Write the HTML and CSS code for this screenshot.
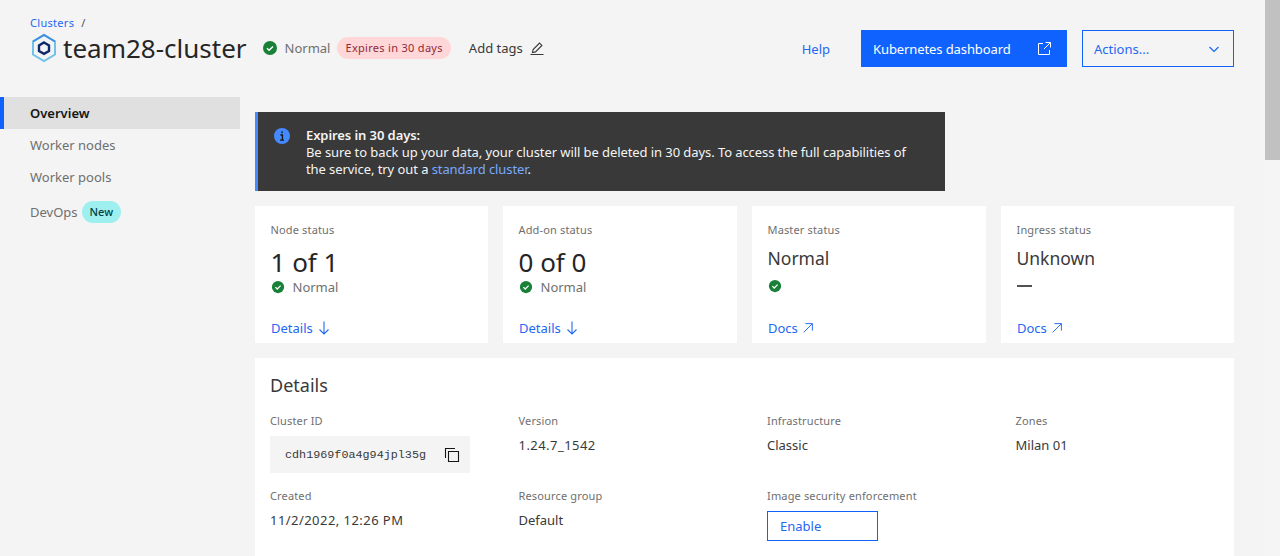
FILE: index.html
```html
<!DOCTYPE html>
<html lang="en">
<head>
    <meta charset="UTF-8">
    <meta name="viewport" content="width=device-width, initial-scale=1.0">
    <title>team28-cluster</title>
    <link rel="stylesheet" href="styles.css">
</head>
<body>

<svg class="sprites" width="0" height="0">
    <symbol id="check" viewBox="0 0 16 16">
        <circle cx="8" cy="8" r="7" fill="#198038"/>
        <path d="M5 8.2l2.1 2.1L11 6.400" fill="none" stroke="#fff" stroke-width="1.400"/>
    </symbol>
    <symbol id="arrow-down" viewBox="0 0 16 16">
        <path d="M8 1.500v12.500M3.500 9.500L8 14l4.500-4.500" fill="none" stroke="currentColor" stroke-width="1.100"/>
    </symbol>
    <symbol id="arrow-up-right" viewBox="0 0 16 16">
        <path d="M3 13L13 3M5 3h8v8" fill="none" stroke="currentColor" stroke-width="1.100"/>
    </symbol>
</svg>

<header class="page-header">
    <div class="title-block">
        <div class="breadcrumb"><a href="#">Clusters</a><span class="slash">/</span></div>
        <div class="title-row">
            <svg class="logo" width="26" height="30" viewBox="0 0 26 30">
                <path d="M13 2l11 6.500v13L13 28 2 21.500v-13z" fill="none" stroke="#6fc3ea" stroke-width="2"/>
                <path d="M2 8.500L13 2l11 6.500" fill="none" stroke="#3f8fe0" stroke-width="2"/>
                <path d="M13 9.500l5 2.900v5.600l-5 2.900-5-2.900v-5.600z" fill="none" stroke="#0f2a6b" stroke-width="2.400"/>
            </svg>
            <h1>team28-cluster</h1>
            <svg class="check" width="16" height="16"><use href="#check"/></svg>
            <span class="state">Normal</span>
            <span class="tag-expires">Expires in 30 days</span>
            <span class="add-tags">Add tags</span>
            <svg class="pencil" width="16" height="16" viewBox="0 0 16 16">
                <path d="M1.500 14.500h13M3.500 12.500l.6-3L10.500 3l2.400 2.400-6.400 6.500z" fill="none" stroke="#393939" stroke-width="1.100"/>
            </svg>
        </div>
    </div>
    <div class="header-actions">
        <a class="help" href="#">Help</a>
        <a class="btn-primary" href="#">
            Kubernetes dashboard
            <svg width="16" height="16" viewBox="0 0 16 16">
                <path d="M7 2.500H2.500v11h11V9M9.500 1.500h5v5M14.500 1.500L8 8" fill="none" stroke="#fff" stroke-width="1"/>
            </svg>
        </a>
        <div class="btn-actions">
            Actions...
            <svg width="12" height="12" viewBox="0 0 12 12">
                <path d="M1.500 4l4.500 4.500L10.500 4" fill="none" stroke="#0f62fe" stroke-width="1.100"/>
            </svg>
        </div>
    </div>
</header>

<div class="layout">
    <nav class="side-nav">
        <a class="nav-item active" href="#">Overview</a>
        <a class="nav-item" href="#">Worker nodes</a>
        <a class="nav-item" href="#">Worker pools</a>
        <a class="nav-item nav-devops" href="#">DevOps <span class="tag-new">New</span></a>
    </nav>

    <main class="content">
        <div class="banner">
            <svg class="banner-icon" width="18" height="18" viewBox="0 0 18 18">
                <circle cx="9" cy="9" r="8" fill="#4589ff"/>
                <path d="M9 4.200v2M7.400 8h2v5M7 13.200h4" fill="none" stroke="#161616" stroke-width="1.300"/>
            </svg>
            <div class="banner-text">
                <strong>Expires in 30 days:</strong><br>
                Be sure to back up your data, your cluster will be deleted in 30 days. To access the full capabilities of the service, try out a <a href="#">standard cluster</a>.
            </div>
        </div>

        <div class="status-grid">
            <section class="card">
                <div class="label">Node status</div>
                <div class="big">1 of 1</div>
                <div class="status-line"><svg width="14" height="14"><use href="#check"/></svg>Normal</div>
                <a class="card-link" href="#">Details <svg width="16" height="16"><use href="#arrow-down"/></svg></a>
            </section>
            <section class="card">
                <div class="label">Add-on status</div>
                <div class="big">0 of 0</div>
                <div class="status-line"><svg width="14" height="14"><use href="#check"/></svg>Normal</div>
                <a class="card-link" href="#">Details <svg width="16" height="16"><use href="#arrow-down"/></svg></a>
            </section>
            <section class="card">
                <div class="label">Master status</div>
                <div class="medium">Normal</div>
                <div class="status-line"><svg width="14" height="14"><use href="#check"/></svg></div>
                <a class="card-link" href="#">Docs <svg width="14" height="14"><use href="#arrow-up-right"/></svg></a>
            </section>
            <section class="card">
                <div class="label">Ingress status</div>
                <div class="medium">Unknown</div>
                <div class="status-line"><span class="dash"></span></div>
                <a class="card-link" href="#">Docs <svg width="14" height="14"><use href="#arrow-up-right"/></svg></a>
            </section>
        </div>

        <section class="details">
            <h2>Details</h2>
            <div class="details-grid">
                <div class="field">
                    <div class="label">Cluster ID</div>
                    <div class="cluster-id">
                        <code>cdh1969f0a4g94jpl35g</code>
                        <svg width="16" height="16" viewBox="0 0 16 16">
                            <path d="M4.500 14.500v-10h10v10zM1.500 11V1.500H11" fill="none" stroke="#161616" stroke-width="1.100"/>
                        </svg>
                    </div>
                </div>
                <div class="field">
                    <div class="label">Version</div>
                    <div class="value number">1.24.7_1542</div>
                </div>
                <div class="field">
                    <div class="label">Infrastructure</div>
                    <div class="value">Classic</div>
                </div>
                <div class="field">
                    <div class="label">Zones</div>
                    <div class="value">Milan 01</div>
                </div>
                <div class="field">
                    <div class="label">Created</div>
                    <div class="value number">11/2/2022, 12:26 PM</div>
                </div>
                <div class="field">
                    <div class="label">Resource group</div>
                    <div class="value">Default</div>
                </div>
                <div class="field">
                    <div class="label">Image security enforcement</div>
                    <a class="btn-enable" href="#">Enable</a>
                </div>
            </div>
        </section>
    </main>
</div>

<div class="scrollbar"><div class="scrollbar-thumb"></div></div>

</body>
</html>
```

FILE: styles.css
```css
html, body {
    height: 556px;
    overflow: hidden;
}
body {
    font-family: "Noto Sans", Arial, sans-serif;
    background-color: #f4f4f4;
    color: #161616;
    margin: 0;
    font-size: 14px;
}
a {
    color: #2468f2;
    text-decoration: none;
}
.sprites {
    position: absolute;
}
.page-header {
    height: 97px;
    display: flex;
    justify-content: space-between;
    align-items: flex-start;
    padding-right: 46px;
}
.title-block {
    padding: 15px 0 0 30px;
}
.breadcrumb {
    font-size: 11px;
    line-height: 15px;
    letter-spacing: .3px;
    display: flex;
    gap: 7px;
}
.slash {
    color: #525252;
}
.title-row {
    display: flex;
    align-items: center;
    height: 30px;
    margin-top: 3px;
}
.logo {
    margin-right: 6px;
    margin-left: 1px;
}
h1 {
    font-size: 26px;
    font-weight: 400;
    margin: 0 15px 0 0;
    color: #262626;
}
.state {
    color: #6f6f6f;
    font-size: 13px;
    margin: 0 7px;
}
.tag-expires {
    background-color: #ffd7d9;
    color: #8f2a36;
    font-size: 11px;
    line-height: 22px;
    letter-spacing: .3px;
    padding: 0 8px;
    border-radius: 11px;
}
.add-tags {
    color: #393939;
    font-size: 13px;
    margin: 0 6px 0 18px;
}
.header-actions {
    display: flex;
    align-items: center;
    margin-top: 30px;
}
.help {
    font-size: 13px;
    margin-right: 31px;
}
.btn-primary {
    width: 206px;
    height: 37px;
    box-sizing: border-box;
    padding: 0 15px 0 12px;
    background-color: #0f62fe;
    color: #fff;
    font-size: 13px;
    letter-spacing: -.1px;
    display: flex;
    align-items: center;
    justify-content: space-between;
}
.btn-actions {
    width: 152px;
    height: 37px;
    box-sizing: border-box;
    margin-left: 15px;
    padding: 0 13px 0 11px;
    border: 1px solid #0f62fe;
    color: #2468f2;
    font-size: 13px;
    display: flex;
    align-items: center;
    justify-content: space-between;
}
.layout {
    display: flex;
}
.side-nav {
    width: 240px;
    margin-right: 15px;
    flex-shrink: 0;
}
.nav-item {
    display: flex;
    align-items: center;
    gap: 4px;
    height: 32px;
    padding-left: 30px;
    color: #6f6f6f;
    font-size: 13px;
}
.nav-item.active {
    background-color: #e0e0e0;
    color: #161616;
    font-weight: 600;
    box-shadow: inset 4px 0 0 #0f62fe;
}
.nav-devops {
    margin-top: 3px;
}
.tag-new {
    background-color: #9ef0f0;
    color: #004144;
    font-size: 11px;
    font-weight: 500;
    line-height: 22px;
    padding: 0 8px;
    border-radius: 11px;
}
.content {
    width: 979px;
    padding-top: 15px;
}
.banner {
    width: 690px;
    height: 79px;
    box-sizing: border-box;
    background-color: #393939;
    border-left: 3px solid #4589ff;
    color: #f4f4f4;
    display: flex;
    padding: 15px 20px 0 15px;
    font-size: 13px;
    line-height: 17px;
    letter-spacing: -.08px;
}
.banner-icon {
    flex-shrink: 0;
    margin-right: 15px;
}
.banner-text strong {
    font-weight: 600;
}
.banner-text a {
    color: #78a9ff;
}
.status-grid {
    display: grid;
    grid-template-columns: 233px 234px 234px 233px;
    gap: 15px;
    margin-top: 15px;
}
.card {
    background-color: #fff;
    height: 137px;
    box-sizing: border-box;
    padding: 16px 15px 0 15.500px;
    position: relative;
}
.label {
    color: #6f6f6f;
    font-size: 11px;
    line-height: 16px;
    letter-spacing: .15px;
}
.big {
    font-size: 26px;
    line-height: 34px;
    margin-top: 7px;
    color: #262626;
}
.medium {
    font-size: 17.500px;
    line-height: 26px;
    margin-top: 7px;
    color: #393939;
}
.status-line {
    display: flex;
    align-items: center;
    gap: 8px;
    color: #6f6f6f;
    font-size: 13px;
    height: 18px;
    margin-top: -1px;
}
.medium + .status-line {
    margin-top: 6px;
}
.dash {
    width: 15px;
    height: 2px;
    background-color: #525252;
}
.card-link {
    position: absolute;
    left: 16px;
    bottom: 6px;
    display: flex;
    align-items: center;
    gap: 3px;
    font-size: 13px;
}
.details {
    background-color: #fff;
    margin-top: 15px;
    height: 300px;
    padding-top: 14px;
}
h2 {
    font-size: 18px;
    font-weight: 400;
    line-height: 26px;
    margin: 0 0 15px 15px;
    color: #393939;
}
.details-grid {
    display: grid;
    grid-template-columns: repeat(4, 233.500px);
    column-gap: 15px;
    grid-auto-rows: 75px;
}
.field {
    padding-left: 15px;
}
.value {
    color: #393939;
    font-size: 13px;
    line-height: 18px;
    margin-top: 7px;
}
.value.number {
    letter-spacing: .45px;
}
.cluster-id {
    width: 200px;
    height: 37px;
    box-sizing: border-box;
    background-color: #f4f4f4;
    margin-top: 7px;
    padding: 0 10px 0 15px;
    display: flex;
    align-items: center;
    justify-content: space-between;
}
code {
    font-family: "Liberation Mono", "DejaVu Sans Mono", monospace;
    font-size: 11.750px;
    color: #393939;
}
.btn-enable {
    display: block;
    width: 111px;
    height: 30px;
    line-height: 28px;
    border: 1px solid #0f62fe;
    padding-left: 12px;
    box-sizing: border-box;
    margin-top: 7px;
    font-size: 13px;
}
.scrollbar {
    position: absolute;
    top: 0;
    right: 0;
    width: 15px;
    height: 556px;
    background-color: #f5f5f5;
}
.scrollbar-thumb {
    height: 160px;
    background-color: #c1c1c1;
}
```
